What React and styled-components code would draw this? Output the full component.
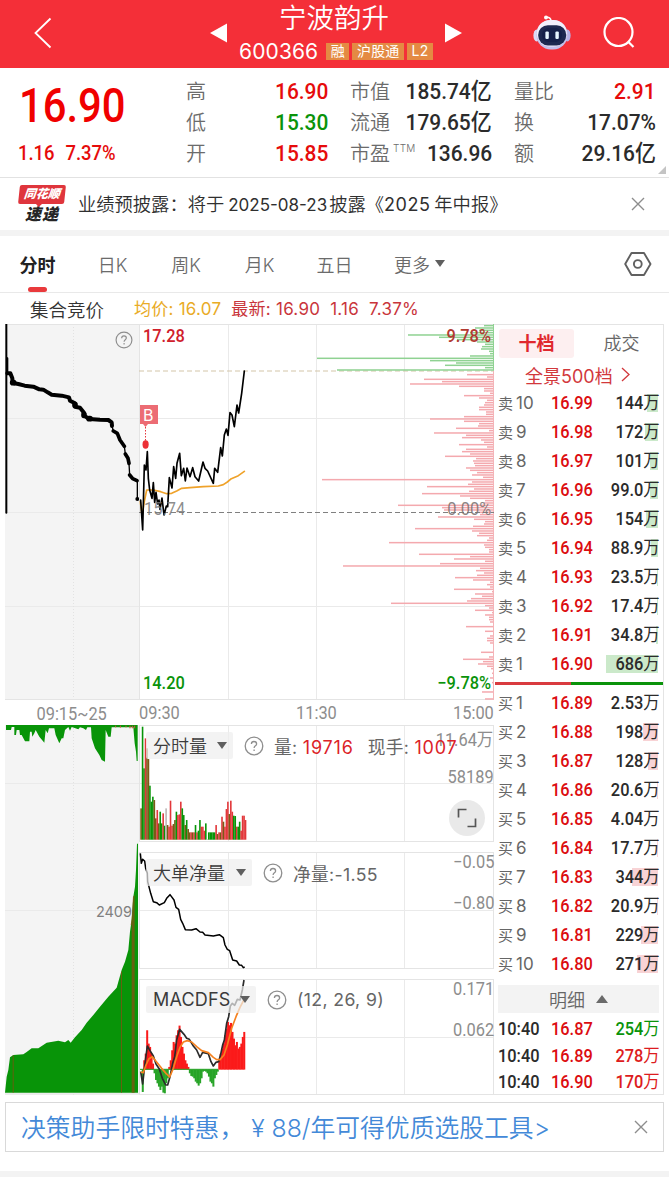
// React
import React from "react";

// StyledComponents
import styled, { createGlobalStyle } from "styled-components";

const stats = [
  [
    ["高", "16.90", "#e60b0b"],
    ["低", "15.30", "#0a930a"],
    ["开", "15.85", "#e60b0b"],
  ],
  [
    ["市值", "185.74亿"],
    ["流通", "179.65亿"],
    ["市盈", "136.96", "#2b2b2b", "TTM"],
  ],
  [
    ["量比", "2.91", "#e60b0b"],
    ["换", "17.07%"],
    ["额", "29.16亿"],
  ],
];

const sells = [
  ["卖10", "16.99", "144万", 11],
  ["卖9", "16.98", "172万", 13],
  ["卖8", "16.97", "101万", 8],
  ["卖7", "16.96", "99.0万", 8],
  ["卖6", "16.95", "154万", 12],
  ["卖5", "16.94", "88.9万", 7],
  ["卖4", "16.93", "23.5万", 1],
  ["卖3", "16.92", "17.4万", 1],
  ["卖2", "16.91", "34.8万", 2],
  ["卖1", "16.90", "686万", 52],
];

const buys = [
  ["买1", "16.89", "2.53万", 0],
  ["买2", "16.88", "198万", 15],
  ["买3", "16.87", "128万", 10],
  ["买4", "16.86", "20.6万", 1],
  ["买5", "16.85", "4.04万", 0],
  ["买6", "16.84", "17.7万", 1],
  ["买7", "16.83", "344万", 26],
  ["买8", "16.82", "20.9万", 1],
  ["买9", "16.81", "229万", 17],
  ["买10", "16.80", "271万", 21],
];

const deals = [
  ["10:40", "16.87", "254万", "#0a930a"],
  ["10:40", "16.89", "278万", "#dd1c20"],
  ["10:40", "16.90", "170万", "#dd1c20"],
];

// 盘口筹码: 前 20 条为绿色, 其余为红色
const depth = [
  10, 19, 15, 24, 86, 55, 37, 17, 9, 12, 13, 5, 4, 24, 177, 64, 38, 49, 9, 157,
  0, 27, 7, 70, 52, 84, 35, 10, 10, 4, 30, 15, 7, 9, 10, 15, 15, 8, 8, 30, 64,
  30, 15, 16, 38, 5, 60, 28, 32, 13, 10, 35, 7, 28, 32, 24, 49, 18, 21, 20, 19,
  28, 24, 17, 22, 11, 172, 22, 26, 67, 20, 25, 72, 34, 24, 9, 10, 96, 52, 50,
  17, 14, 56, 20, 9, 10, 21, 79, 22, 15, 17, 5, 7, 105, 10, 9, 5, 5, 75, 24, 40,
  9, 54, 151, 14, 18, 10, 17, 39, 21, 4, 7, 4, 40, 2, 19, 12, 23, 27, 103, 9, 5,
  19, 2, 9, 5, 5, 4, 0, 28, 0, 9, 0, 4, 7, 7, 4, 0, 0, 0, 13, 0, 5, 31, 11, 16,
  7, 3, 0, 2, 0, 4, 0, 2, 0, 1, 0, 12, 0, 1, 9,
];

const volumes =
  "b94 g339 g214 r304 b274 b242 g162 g114 g129 b119 b64 r89 b49 g84 g49 r79 g42 x94 b44 r39 r117 r42 b47 b59 g84 r74 r76 r114 g94 g74 b44 g59 b32 b22 r22 b22 r22 g44 r22 g27 g59 r39 r39 r27 g49 x2 g22 g22 g22 g22 g22 r44 b17 r22 b22 r69 b54 r39 r92 r114 b77 r117 r84 g72 g71 r39 g39 g54 r27 r72 r72 r59".split(
    " "
  );
const volumeColors = { g: "#089408", r: "#e2373a", b: "#7b5a16", x: "#bdb6b6" };

const macd = [
  -2, -68, 28, 48, 118, 78, 68, 48, 18, -12, -32, -42, -52, -62, -52, -70, -72,
  -42, -27, 8, 28, 58, 83, 78, 103, 118, 132, 98, 68, 48, 28, 18, 8, -12, -20,
  -22, -27, -37, -42, -49, -42, -27, -7, -5, -7, -12, -22, -37, -42, -52, -27,
  -17, -7, 28, 48, 63, 78, 103, 123, 143, 133, 140, 113, 93, 73, 83, 63, 68, 78,
  98, 113,
];

function Question({ size = 20 }) {
  return (
    <svg width={size} height={size} viewBox="0 0 20 20" fill="none" stroke="#8e8e8e" strokeWidth="1.3">
      <circle cx="10" cy="10" r="8.8" />
      <path d="M7.4 8.1c0-1.6 1.1-2.6 2.6-2.6s2.6 1 2.6 2.4c0 1.9-2.5 1.9-2.5 4.1" />
      <path d="M10.1 13.4v1.5" />
    </svg>
  );
}

function Close() {
  return (
    <svg width="14" height="14" viewBox="0 0 14 14" stroke="#8d8d8d" strokeWidth="1.4">
      <path d="M1 1l12 12M13 1L1 13" />
    </svg>
  );
}

function Robot() {
  return (
    <svg width="38" height="36" viewBox="0 0 38 36">
      <circle cx="13" cy="2.4" r="2" fill="#fff" />
      <path d="M13 2.4q5-.7 5 4" fill="none" stroke="#fff" strokeWidth="1.6" />
      <ellipse cx="3.6" cy="20.5" rx="3.2" ry="6" fill="#dcd9f6" />
      <ellipse cx="34.4" cy="20.5" rx="3.2" ry="6" fill="#b5b2e6" />
      <rect x="3.4" y="5" width="31.2" height="29.4" rx="14.5" fill="#c4bfeb" />
      <rect x="3.8" y="5" width="30" height="26.5" rx="13.2" fill="#f1effc" />
      <rect x="5.2" y="10.2" width="28" height="20.2" rx="9.600" fill="#1d2850" />
      <rect x="9" y="13" width="20" height="14" rx="6.5" fill="#15204a" />
      <rect x="12.4" y="16.400" width="3.4" height="7.6" rx="1.2" fill="#e6f5ff" />
      <rect x="22.4" y="16.400" width="3.4" height="7.6" rx="1.2" fill="#e6f5ff" />
    </svg>
  );
}

// 集合竞价
function AuctionPrice() {
  return (
    <svg width="134" height="376" viewBox="5 324 134 376">
      <path d="M5 418.5h134M5 512.5h134M5 606.5h134" stroke="#eaeaea" />
      <path d="M73.500 324v376" stroke="#e2e2e2" strokeDasharray="1 2" />
      <path d="M5 324.500h134M5 699.500h134" stroke="#e4e4e4" />
      <g transform="translate(0 230) scale(.33333)" fill="none" stroke="#000" strokeLinejoin="round" strokeLinecap="round">
        <path strokeWidth="6" d="M19 283V848M22 385V430" />
        <path
          strokeWidth="12"
          d="M22 430L31 430L37 445L38 459L55 462L74 467L100 470L118 478L130 479L143 487L155 494L185 497L207 502L210 512L225 520V530L240 533L252 548V557L268 567L300 569L325 570L335 577L336 588"
        />
        <path strokeWidth="11" d="M340 603L352 610L360 630L373 649M376 672L384 685L387 700M389 735L398 746L411 752" />
        <path strokeWidth="17" d="M225 524v2M252 554v2M267 566h3M38 458h3" />
        <path strokeWidth="4" d="M336 588L340 603M373 649L376 672M387 700L389 735M412 752V807" />
        <circle cx="412" cy="807" r="6" fill="#000" stroke="none" />
      </g>
    </svg>
  );
}

function AuctionVolume() {
  return (
    <svg width="134" height="370" viewBox="5 725 134 370">
      <path d="M5 783.500h134M5 910.500h134" stroke="#eaeaea" />
      <path d="M73.500 725v370" stroke="#e2e2e2" strokeDasharray="1 2" />
      <path d="M5 1094h134" stroke="#e4e4e4" />
      <g transform="translate(0 680) scale(.33333)" fill="#089408">
        <path d="M18 135V150H33L35 141H43V165H48L50 150H58L60 165H65L75 184H88L90 155H95L97 170L103 160L107 150L118 170L133 188L137 150L143 160L147 145H163L167 165L178 190L185 175H190L195 150L205 141L210 152L215 141L235 148L240 142L250 145L258 150L262 142H273L275 175L285 205L298 225L305 240L315 245L317 150L325 170H332L335 142H400L404 190L408 215L410 243H413V135Z" />
        <path d="M15 1238L20 1190L25 1170L30 1132L40 1125L70 1123L80 1116L95 1105H115L140 1088L175 1082L195 1087L205 1080L212 1088L225 1072L245 1050L260 1028L280 1005L300 980L325 950L350 923L365 870L375 845L385 810L390 755L395 720L400 650L405 620L408 570L411 491H414V1238Z" />
        <path d="M392 735L395 715L399 650L404 645V1238H395V735ZM363 875h3v363h-3zM38 1126h3v112h-3z" fill="#7d5412" opacity=".8" />
        <path d="M347 137v5M361 137v6M378 137v5M390 137v8M397 137v8M404 137v8" stroke="#d54a3a" strokeWidth="3" />
      </g>
    </svg>
  );
}

// 分时价格
function PriceChart() {
  return (
    <svg width="355" height="376" viewBox="139 324 355 376">
      <path d="M228.500 324v376M316.500 324v376M404.500 324v376M139 418.500h355M139 606.500h355" stroke="#eaeaea" />
      <path d="M139 324.500h355M139 699.500h355M139.500 324v376M493.500 324v376" stroke="#e4e4e4" />
      <path d="M139 371h355" stroke="#d3c5a8" strokeDasharray="5 3" />
      {depth.map((w, i) => (
        <rect
          key={i}
          x={494 - w}
          y={324.900 + i * 2.3333}
          width={w}
          height="1.500"
          fill={i < 20 ? "#8fd292" : "#f4a9ae"}
        />
      ))}
      <path d="M493.500 324v46" stroke="#8fd292" />
      <path d="M493.500 371v328" stroke="#f4b4b8" />
      <path d="M139 512.500h355" stroke="#808080" strokeDasharray="5 3" />
      <g transform="translate(130 400) scale(.33333)" fill="none" strokeLinejoin="round" strokeLinecap="round">
        <path
          stroke="#efa22a"
          strokeWidth="5"
          d="M31 305L36 345L43 305L50 270L70 270L92 275L110 281L125 280L140 273L155 265L180 263L220 260L265 258L280 254L292 246L304 236L325 227L343 214"
        />
        <path
          stroke="#000"
          strokeWidth="5"
          d="M32 300L38 390L43 195L48 210L52 155L55 235L59 270L66 295L70 248L74 307L78 277L83 312L87 300L90 328L96 294L102 345L106 330L109 318L113 320L118 233L126 264L131 200L137 235L141 190L149 160L154 227L161 205L166 243L171 204L180 230L188 203L195 230L206 243L219 186L225 205L233 213L250 250L254 205L263 217L272 143L277 168L283 105L289 87L294 106L300 38L306 45L313 80L321 15L326 39L335 -20L343 -87"
        />
      </g>
      <path d="M140 405h18v19h-10l-2.500 3-2.500-3h-3z" fill="#ec6c74" />
      <path d="M145.500 427v14" stroke="#e6353c" strokeDasharray="1.500 1.500" />
      <ellipse cx="145.600" cy="444.500" rx="3.100" ry="4.200" fill="#ec3036" />
    </svg>
  );
}

function VolumeChart() {
  return (
    <svg width="355" height="117" viewBox="139 725 355 117">
      <PaneGrid top={725} mid={783} bottom={841} />
      {volumes.map((v, i) => {
        const h = v.slice(1) / 3;
        return (
          <rect key={i} x={140.300 + i * 1.471} y={839.700 - h} width="1.600" height={h} fill={volumeColors[v[0]]} />
        );
      })}
    </svg>
  );
}

function NetChart() {
  return (
    <svg width="355" height="117" viewBox="139 852 355 117">
      <PaneGrid top={852} mid={910} bottom={968} />
      <path
        transform="translate(0 680) scale(.33333)"
        fill="none"
        stroke="#000"
        strokeWidth="4.500"
        strokeLinejoin="round"
        d="M421 520L424 550L428 538L434 543L437 565L442 580L443 605L452 640L460 665L470 668L478 675L493 668L500 655L510 644L522 660L528 682L536 688L542 718L548 730L556 749L575 750L588 746L600 756L608 757L615 765L640 768L658 764L670 773L675 795L682 808L689 812L698 840L710 843L718 855L725 856L730 863L734 861"
      />
    </svg>
  );
}

function MacdChart() {
  return (
    <svg width="355" height="117" viewBox="139 979 355 117">
      <PaneGrid top={979} mid={1037} bottom={1094} />
      {macd.map((v, i) => (
        <rect
          key={i}
          x={140.300 + i * 1.471}
          y={v > 0 ? 1069.600 - v / 3 : 1069.300}
          width="2"
          height={Math.abs(v) / 3}
          fill={v > 0 ? "#fb1a1a" : "#28a428"}
        />
      ))}
      <path d="M140 1069.300h78" stroke="#28a428" />
      <g transform="translate(0 920) scale(.33333)" fill="none" strokeWidth="5" strokeLinejoin="round">
        <path
          stroke="#2b2b2b"
          d="M422 455L428 492L435 430L442 378L450 392L460 408L468 432L478 447L487 475L497 495H503L510 470L518 430L524 410L530 360L539 328L552 343L560 355L568 358L580 378L590 390L600 412L608 397L625 401L633 425L640 438L648 427L656 425L662 403L668 375L673 360L680 310L686 290L691 258L697 250L704 256L712 238L720 240L727 210L732 180"
        />
        <path
          stroke="#f58220"
          d="M422 456L430 458L438 435L447 416L457 410L468 424L485 445L498 460L509 471L520 445L530 410L540 382L550 366L562 362L575 366L590 380L605 392L625 398L640 412L650 419H660L672 405L682 375L695 325L708 290L720 262L733 237"
        />
      </g>
    </svg>
  );
}

function PaneGrid({ top, mid, bottom }) {
  return (
    <>
      <path
        d={`M228.500 ${top}V${bottom}M316.500 ${top}V${bottom}M404.500 ${top}V${bottom}M139 ${mid + 0.5}h355`}
        stroke="#eaeaea"
      />
      <path
        d={`M139 ${top + 0.5}h355M139 ${bottom + 0.5}h355M139.500 ${top}V${bottom}M493.500 ${top}V${bottom}`}
        stroke="#e4e4e4"
      />
    </>
  );
}

function BookRow({ row, color }) {
  const [label, price, amount, bar] = row;
  return (
    <BookLine>
      <Level>
        {label[0]}
        <span>{label.slice(1)}</span>
      </Level>
      <BookPrice>{price}</BookPrice>
      <Amount>
        <AmountBar $color={color} style={{ width: bar }} />
        <Num $right>
          {amount.slice(0, -1)}
          <Unit>万</Unit>
        </Num>
      </Amount>
    </BookLine>
  );
}

export default function App() {
  return (
    <Page>
      <GlobalStyle />
      <Header>
        <BackBox>
          <svg width="18" height="32" viewBox="0 0 18 32" fill="none" stroke="#fff" strokeWidth="1.800">
            <path d="M16.500 1.500L1.500 16L16.500 30.500" />
          </svg>
        </BackBox>
        <Arrow width="18" height="20" viewBox="0 0 18 20">
          <path d="M0 10L17 0.500V19.500z" fill="#fff" />
        </Arrow>
        <TitleBox>
          <StockName>宁波韵升</StockName>
          <CodeLine>
            <Code>600366</Code>
            <Tag>融</Tag>
            <Tag>沪股通</Tag>
            <Tag>L2</Tag>
          </CodeLine>
        </TitleBox>
        <Arrow width="18" height="20" viewBox="0 0 18 20">
          <path d="M18 10L1 0.500V19.500z" fill="#fff" />
        </Arrow>
        <HeaderIcons>
          <Robot />
          <svg width="32" height="32" viewBox="0 0 32 32" fill="none" stroke="#fff" strokeWidth="2.200">
            <circle cx="15.500" cy="15" r="14" />
            <path d="M25.500 25L30.500 30" />
          </svg>
        </HeaderIcons>
      </Header>

      <Quote>
        <PriceBox>
          <BigPrice>16.90</BigPrice>
          <Change>
            <span>1.16</span>
            <span>7.37%</span>
          </Change>
        </PriceBox>
        {stats.map((col, i) => (
          <StatCol key={i}>
            {col.map(([name, value, color, sup]) => (
              <Stat key={name}>
                <StatName>
                  {name}
                  {sup && <sup>{sup}</sup>}
                </StatName>
                <StatValue $color={color}>{value}</StatValue>
              </Stat>
            ))}
          </StatCol>
        ))}
        <Corner />
      </Quote>

      <News>
        <Logo>
          <LogoTop>同花顺</LogoTop>
          <LogoBottom>速递</LogoBottom>
        </Logo>
        <NewsText>
          业绩预披露：将于<i>2025-08-23</i>披露《<b>2025</b>年中报》
        </NewsText>
        <Close />
      </News>
      <Divider />

      <Tabs>
        <Tab $w={75} $active>
          分时
        </Tab>
        <Tab $w={75}>日K</Tab>
        <Tab $w={72}>周K</Tab>
        <Tab $w={75}>月K</Tab>
        <Tab $w={75}>五日</Tab>
        <Tab $w={95}>
          更多
          <Caret />
        </Tab>
        <Setting>
          <svg width="28" height="26" viewBox="0 0 28 26" fill="none" stroke="#606060" strokeWidth="1.900" strokeLinejoin="round">
            <path d="M7.500 2h12.500l6.500 11-6.500 11H7.500L1.200 13z" />
            <circle cx="13.800" cy="13" r="3.900" />
          </svg>
        </Setting>
      </Tabs>

      <InfoLine>
        <InfoTitle>集合竞价</InfoTitle>
        <Info $color="#e9ab26" $gap={10}>
          均价: 16.07
        </Info>
        <Info $color="#c9353b" $gap={10}>
          最新: 16.90
        </Info>
        <Info $color="#c9353b" $gap={10}>
          1.16
        </Info>
        <Info $color="#c9353b">7.37%</Info>
      </InfoLine>

      <Board>
        <LeftCol>
          <Shade>
            <AuctionPrice />
            <Over $top={7} $right={6}>
              <Question size={18} />
            </Over>
          </Shade>
          <Axis>
            <AxisText $center>09:15~25</AxisText>
          </Axis>
          <Shade>
            <AuctionVolume />
            <Over $top={175} $right={7}>
              <Small>2409</Small>
            </Over>
          </Shade>
        </LeftCol>

        <MidCol>
          <Pane $h={376}>
            <PriceChart />
            <Over $top={0} $left={4}>
              <Num $color="#d0202b">17.28</Num>
            </Over>
            <Over $top={0} $right={3}>
              <Num $right $color="#b23a31">9.78%</Num>
            </Over>
            <Over $top={173} $left={5}>
              <Num $color="rgba(120,120,120,.85)" $light>15.74</Num>
            </Over>
            <Over $top={173} $right={3}>
              <Num $right $color="rgba(120,110,110,.85)" $light>0.00%</Num>
            </Over>
            <Over $top={347} $left={4}>
              <Num $color="#0a930a">14.20</Num>
            </Over>
            <Over $top={347} $right={3}>
              <Num $right $color="#0a930a">−9.78%</Num>
            </Over>
            <Over $top={80} $left={4}>
              <Mark>B</Mark>
            </Over>
          </Pane>
          <Axis>
            <AxisText>09:30</AxisText>
            <AxisText $mid>11:30</AxisText>
            <AxisText $right>15:00</AxisText>
          </Axis>
          <Pane $h={127}>
            <VolumeChart />
            <Over $top={3} $right={1}>
              <Num $right $light $color="#8d8d8d">11.64万</Num>
            </Over>
            <Over $top={40} $right={0}>
              <Num $right $light $color="#8d8d8d">58189</Num>
            </Over>
            <Legend>
              <Picker $w={87}>
                分时量
                <Caret />
              </Picker>
              <Question />
              <Note>
                量: <Red>19716</Red>
              </Note>
              <Note $gap={4}>
                现手: <Red>1007</Red>
              </Note>
            </Legend>
            <Over $top={75} $right={9}>
              <Expand>
                <svg width="20" height="20" viewBox="0 0 20 20" fill="none" stroke="#555" strokeWidth="1.700">
                  <path d="M1.500 9.500V1.500h8M18.500 10.500v8h-8" />
                </svg>
              </Expand>
            </Over>
          </Pane>
          <Pane $h={127}>
            <NetChart />
            <Over $top={-2} $right={0}>
              <Num $right $light $color="#8d8d8d">−0.05</Num>
            </Over>
            <Over $top={39} $right={0}>
              <Num $right $light $color="#8d8d8d">−0.80</Num>
            </Over>
            <Legend>
              <Picker $w={106}>
                大单净量
                <Caret />
              </Picker>
              <Question />
              <Note>净量:-1.55</Note>
            </Legend>
          </Pane>
          <Pane $h={117}>
            <MacdChart />
            <Over $top={-2} $right={0}>
              <Num $right $light $color="#8d8d8d">0.171</Num>
            </Over>
            <Over $top={39} $right={0}>
              <Num $right $light $color="#8d8d8d">0.062</Num>
            </Over>
            <Legend>
              <Picker $w={110}>
                <Latin>MACDFS</Latin>
                <Caret />
              </Picker>
              <Question />
              <Note>(12, 26, 9)</Note>
            </Legend>
          </Pane>
        </MidCol>

        <RightCol>
          <BookTabs>
            <BookTab $active>十档</BookTab>
            <BookTab>成交</BookTab>
          </BookTabs>
          <AllLevels>
            全景500档
            <svg width="9" height="15" viewBox="0 0 9 15" fill="none" stroke="#d2383c" strokeWidth="1.300">
              <path d="M1 1l7 6.500L1 14" />
            </svg>
          </AllLevels>
          {sells.map((row) => (
            <BookRow key={row[0]} row={row} color="#cbe9ca" />
          ))}
          <Ratio />
          {buys.map((row) => (
            <BookRow key={row[0]} row={row} color="#f8d3d5" />
          ))}
          <DetailBar>
            明细
            <CaretUp />
          </DetailBar>
          {deals.map(([time, price, amount, color]) => (
            <Deal key={price}>
              <DealTime>{time}</DealTime>
              <BookPrice>{price}</BookPrice>
              <Amount>
                <Num $right $color={color}>
                  {amount.slice(0, -1)}
                  <Unit>万</Unit>
                </Num>
              </Amount>
            </Deal>
          ))}
        </RightCol>
      </Board>

      <Promo>
        <span>决策助手限时特惠， ¥ 88/年可得优质选股工具&gt;</span>
        <Close />
      </Promo>
      <Divider />
    </Page>
  );
}

const GlobalStyle = createGlobalStyle`
  body {
    margin: 0;
    background: #fff;
  }
  * {
    box-sizing: border-box;
  }
  svg {
    display: block;
    flex: none;
  }
`;

const Page = styled.div`
  width: 669px;
  height: 1200px;
  overflow: hidden;
  background: #fff;
  color: #333;
  font-family: "Inter", "Noto Sans CJK SC", sans-serif;
  font-size: 18px;
  white-space: nowrap;
`;

const Num = styled.span`
  display: inline-block;
  font-family: "Roboto", "Noto Sans CJK SC", sans-serif;
  font-size: 18px;
  line-height: 24px;
  font-weight: ${(p) => (p.$light ? 400 : 500)};
  color: ${(p) => p.$color || "#2b2b2b"};
  transform: scaleX(0.91);
  transform-origin: ${(p) => (p.$right ? "right" : "left")} center;
`;

const Unit = styled.span`
  font-weight: 400;
`;

const Latin = styled.span`
  font-weight: 400;
  letter-spacing: 0.2px;
`;

const Header = styled.header`
  display: flex;
  align-items: center;
  height: 68px;
  background: #f42f38;
  color: #fff;
`;

const Arrow = styled.svg`
  margin-top: -3px;
`;

const BackBox = styled.div`
  width: 210px;
  padding-left: 34px;
  padding-bottom: 2px;
`;

const TitleBox = styled.div`
  display: flex;
  flex-direction: column;
  align-items: center;
  width: 216px;
  height: 68px;
`;

const StockName = styled.div`
  height: 37px;
  margin-left: -4px;
  line-height: 36px;
  font-size: 27.5px;
  font-weight: 350;
`;

const CodeLine = styled.div`
  display: flex;
  align-items: center;
  gap: 3px;
  height: 29px;
`;

const Code = styled.span`
  margin-right: 5px;
  font-size: 21px;
  letter-spacing: 0.1px;
`;

const Tag = styled.span`
  height: 17px;
  padding: 0 4.500px;
  background: #e48a43;
  font-size: 14px;
  line-height: 16px;
  letter-spacing: 0.2px;
`;

const HeaderIcons = styled.div`
  display: flex;
  align-items: center;
  gap: 32px;
  padding-left: 71px;
  padding-bottom: 3px;
`;

const Quote = styled.section`
  position: relative;
  display: flex;
  height: 110px;
  padding-top: 8px;
  border-bottom: 1px solid #e2e2e2;
`;

const PriceBox = styled.div`
  flex: none;
  width: 186px;
  padding-left: 18px;
`;

const BigPrice = styled(Num)`
  display: block;
  width: 130px;
  margin-left: 1px;
  color: #f00000;
  font-size: 48px;
  line-height: 60px;
  transform: scaleX(0.87);
`;

const Change = styled.div`
  display: flex;
  gap: 12px;
  color: #e60b0b;
  font-family: "Roboto", sans-serif;
  font-size: 20.500px;
  line-height: 34px;
  font-weight: 500;
  transform: scaleX(0.9);
  transform-origin: left center;
`;

const StatCol = styled.div`
  flex: none;
  width: 142px;
  margin-right: 22px;
`;

const Stat = styled.div`
  display: flex;
  justify-content: space-between;
  height: 31px;
  line-height: 31px;
`;

const StatName = styled.span`
  color: #6b6b6b;
  font-size: 20px;
  line-height: 33px;
  font-weight: 350;

  sup {
    display: inline-block;
    margin-left: 3px;
    font-size: 10px;
    line-height: 10px;
    letter-spacing: 0.3px;
    vertical-align: 9px;
  }
`;

const StatValue = styled.span`
  color: ${(p) => p.$color || "#2b2b2b"};
  font-family: "Roboto", "Noto Sans CJK SC", sans-serif;
  font-size: 22.500px;
  font-weight: 500;
  transform: scaleX(0.93);
  transform-origin: right center;
`;

const Corner = styled.i`
  position: absolute;
  right: 3px;
  bottom: 3px;
  border-left: 8px solid transparent;
  border-bottom: 8px solid #c4c4c4;
`;

const News = styled.section`
  display: flex;
  align-items: center;
  height: 52px;
  padding: 0 24px 0 19px;
`;

const Logo = styled.div`
  width: 46px;
  height: 39px;
  margin-right: 13px;
  text-align: center;
  font-style: italic;
  font-weight: 900;
`;

const LogoTop = styled.div`
  position: relative;
  height: 19px;
  border-radius: 2px;
  background: #df353c;
  color: #fff;
  font-size: 12px;
  line-height: 18px;
  transform: skewX(-6deg);

  &::after {
    content: "";
    position: absolute;
    left: 18px;
    top: 19px;
    border: 3px solid transparent;
    border-top-color: #df353c;
    border-bottom: 0;
  }
`;

const LogoBottom = styled.div`
  color: #252525;
  font-size: 16px;
  line-height: 21px;
  letter-spacing: 1px;
`;

const NewsText = styled.div`
  flex: 1;
  padding-bottom: 2px;
  color: #2f2f2f;
  font-size: 18.300px;
  font-weight: 350;

  i,
  b {
    padding: 0 2px 0 4px;
    font-size: 17px;
    font-style: normal;
    font-weight: 400;
  }
  b {
    padding: 0 4px 0 0;
    font-size: 18px;
    letter-spacing: 0.500px;
  }
`;

const Divider = styled.div`
  height: 6px;
  background: #f3f3f3;
`;

const Tabs = styled.nav`
  display: flex;
  height: 57px;
  border-bottom: 1px solid #e9e9e9;
`;

const Tab = styled.div`
  position: relative;
  display: flex;
  justify-content: center;
  align-items: center;
  gap: 5px;
  width: ${(p) => p.$w}px;
  padding-bottom: 1px;
  color: ${(p) => (p.$active ? "#222" : "#6b6b6b")};
  font-size: 18px;
  font-weight: ${(p) => (p.$active ? 700 : 350)};

  &::after {
    content: "";
    position: absolute;
    display: ${(p) => (p.$active ? "block" : "none")};
    bottom: 0;
    width: 19px;
    height: 5px;
    border-radius: 3px;
    background: #e93a3c;
  }
`;

const Caret = styled.i`
  border: 5px solid transparent;
  border-top: 7px solid #5f5f5f;
  border-bottom: 0;
`;

const CaretUp = styled.i`
  border: 6px solid transparent;
  border-bottom: 8px solid #6a6a6a;
  border-top: 0;
`;

const Setting = styled.div`
  display: flex;
  align-items: center;
  margin-left: auto;
  padding-right: 17px;
`;

const InfoLine = styled.div`
  display: flex;
  height: 31px;
  padding-left: 30px;
  line-height: 32px;
`;

const InfoTitle = styled.span`
  width: 104px;
  font-size: 18.5px;
  line-height: 34px;
  font-weight: 350;
`;

const Info = styled.span`
  margin-right: ${(p) => p.$gap || 0}px;
  color: ${(p) => p.$color};
  font-size: 17px;
  letter-spacing: 0.250px;
`;

const Board = styled.div`
  display: flex;
  height: 771px;
  padding-left: 5px;
`;

const LeftCol = styled.div`
  width: 134px;
`;

const Shade = styled.div`
  position: relative;
  background: #f4f4f4;
`;

const MidCol = styled.div`
  width: 355px;
`;

const Pane = styled.div`
  position: relative;
  height: ${(p) => p.$h}px;
`;

const Over = styled.div`
  position: absolute;
  top: ${(p) => p.$top}px;
  ${(p) => (p.$left !== undefined ? `left: ${p.$left}px;` : `right: ${p.$right}px;`)}
`;

const Axis = styled.div`
  display: flex;
  justify-content: space-between;
  height: 25px;
`;

const AxisText = styled(Num)`
  ${(p) => p.$center && "margin: 1px auto 0;"}
  color: #8d8d8d;
  font-weight: 400;
  line-height: 25px;
  transform-origin: ${(p) => (p.$right ? "right" : p.$center || p.$mid ? "center" : "left")};
`;

const Small = styled.span`
  color: #808080;
  font-size: 14.500px;
  line-height: 20px;
`;

const Mark = styled.span`
  color: #fff;
  font-size: 16px;
  line-height: 19px;
`;

const Legend = styled.div`
  position: absolute;
  top: 7px;
  left: 7px;
  display: flex;
  align-items: center;
`;

const Picker = styled.div`
  display: flex;
  justify-content: space-between;
  align-items: center;
  width: ${(p) => p.$w}px;
  height: 27px;
  margin-right: 11px;
  padding: 0 6px 1px 7px;
  border-radius: 2px;
  background: rgba(238, 238, 238, 0.7);
  color: #3b3b3b;
  font-size: 18px;
  font-weight: 350;
`;

const Note = styled.span`
  margin-left: ${(p) => 10 + (p.$gap || 0)}px;
  color: #666;
  font-size: 17.700px;
  letter-spacing: 0.350px;
`;

const Red = styled.span`
  color: #dc2228;
  font-size: 18px;
  letter-spacing: 0.800px;
`;

const Expand = styled.div`
  display: flex;
  justify-content: center;
  align-items: center;
  width: 36px;
  height: 36px;
  border-radius: 50%;
  background: rgba(228, 228, 228, 0.8);
`;

const RightCol = styled.div`
  width: 170px;
  padding-left: 4px;
  border-top: 1px solid #e4e4e4;
  border-right: 1px solid #e4e4e4;
  border-bottom: 1px solid #e4e4e4;
`;

const BookTabs = styled.div`
  display: flex;
  height: 37px;
  padding: 4px 0 0 1px;
`;

const BookTab = styled.div`
  width: ${(p) => (p.$active ? 75 : 95)}px;
  flex: none;
  height: 29px;
  border-radius: 3px;
  background: ${(p) => (p.$active ? "#fdeff0" : "transparent")};
  color: ${(p) => (p.$active ? "#e0282e" : "#666")};
  font-size: 18px;
  line-height: 29px;
  font-weight: ${(p) => (p.$active ? 700 : 350)};
  text-align: center;
`;

const AllLevels = styled.div`
  display: flex;
  align-items: center;
  gap: 8px;
  height: 27px;
  padding: 0 0 2px 27px;
  color: #d2383c;
  font-size: 18px;
  font-weight: 370;
`;

const BookLine = styled.div`
  display: flex;
  align-items: center;
  height: 29px;
  padding-bottom: 2px;
`;

const Level = styled.span`
  width: 53px;
  color: #666;
  font-size: 15px;

  span {
    margin-left: 3px;
    font-size: 17px;
  }
`;

const BookPrice = styled(Num)`
  width: 45px;
  color: #dc0c10;
`;

const Amount = styled.div`
  position: relative;
  display: flex;
  justify-content: flex-end;
  flex: 1;
  padding-right: 3px;

  span {
    position: relative;
  }
`;

const AmountBar = styled.i`
  position: absolute;
  right: 5px;
  top: 3px;
  height: 18px;
  background: ${(p) => p.$color};
`;

const Ratio = styled.div`
  height: 3px;
  margin: 3px 0 4px -3px;
  background: linear-gradient(90deg, #d93b3f 45%, #0a930a 45%);
`;

const DetailBar = styled.div`
  display: flex;
  justify-content: center;
  align-items: center;
  gap: 11px;
  width: 161px;
  height: 28px;
  margin: 6px 0 3px;
  background: #f3f3f3;
  color: #666;
  font-size: 18px;
  font-weight: 350;
`;

const Deal = styled.div`
  display: flex;
  align-items: center;
  height: 26.500px;
`;

const DealTime = styled(Num)`
  width: 53px;
`;

const Promo = styled.div`
  display: flex;
  justify-content: space-between;
  align-items: center;
  height: 50px;
  margin: 7px 5px 19px;
  padding: 0 15px;
  border: 1px solid #d9d9d9;
  color: #4389d8;
  font-size: 24.800px;
  font-weight: 350;

  span {
    padding-bottom: 3px;
  }
`;
